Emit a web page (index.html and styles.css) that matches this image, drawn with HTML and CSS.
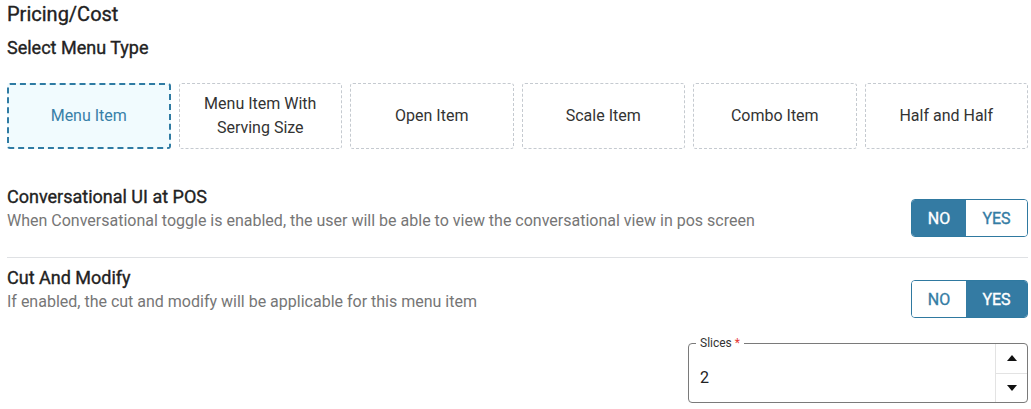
FILE: index.html
```html
<!DOCTYPE html>
<html lang="en">
<head>
    <meta charset="UTF-8">
    <meta name="viewport" content="width=device-width, initial-scale=1.0">
    <title>Pricing/Cost</title>
    <link rel="stylesheet" href="styles.css">
</head>
<body>

<h1 class="page-title">Pricing/Cost</h1>
<h2 class="section-title">Select Menu Type</h2>

<!-- Типы пунктов меню -->
<div class="type-grid">
    <div class="type-card selected">Menu Item</div>
    <div class="type-card">Menu Item With<br>Serving Size</div>
    <div class="type-card">Open Item</div>
    <div class="type-card">Scale Item</div>
    <div class="type-card">Combo Item</div>
    <div class="type-card">Half and Half</div>
</div>

<div class="setting-row with-divider">
    <div class="setting-text">
        <div class="setting-title">Conversational UI at POS</div>
        <div class="setting-desc">When Conversational toggle is enabled, the user will be able to view the conversational view in pos screen</div>
    </div>
    <div class="toggle">
        <span class="toggle-no active">NO</span>
        <span class="toggle-yes">YES</span>
    </div>
</div>

<div class="setting-row">
    <div class="setting-text">
        <div class="setting-title">Cut And Modify</div>
        <div class="setting-desc">If enabled, the cut and modify will be applicable for this menu item</div>
    </div>
    <div class="toggle">
        <span class="toggle-no">NO</span>
        <span class="toggle-yes active">YES</span>
    </div>
</div>

<!-- Поле количества кусков -->
<div class="field-row">
    <div class="number-field">
        <label>Slices <span class="required">*</span></label>
        <div class="number-value">2</div>
        <div class="spinner">
            <div class="spin-btn"><span class="arrow-up"></span></div>
            <div class="spin-btn"><span class="arrow-down"></span></div>
        </div>
    </div>
</div>

</body>
</html>
```

FILE: styles.css
```css
body {
    margin: 0;
    padding: 0 3px 0 7px;
    font-family: Roboto, "Liberation Sans", Arial, sans-serif;
    color: #222;
    background: #fff;
}
/* Полужирный шрифт (medium) */
.page-title,
.section-title,
.setting-title,
.toggle span {
    font-weight: 400;
    -webkit-text-stroke: 0.35px currentColor;
}
.page-title {
    margin: 3px 0 0;
    font-size: 20px;
    line-height: 23px;
    color: #222;
}
.section-title {
    margin: 11px 0 0;
    font-size: 18px;
    line-height: 22px;
    color: #222;
}
.type-grid {
    display: grid;
    grid-template-columns: repeat(6, 1fr);
    gap: 8px;
    margin-top: 24px;
}
.type-card {
    height: 66px;
    box-sizing: border-box;
    border: 1px dashed #c5cad0;
    border-radius: 3px;
    display: flex;
    align-items: center;
    justify-content: center;
    text-align: center;
    font-size: 16px;
    line-height: 24px;
    color: #333;
}
.type-card.selected {
    border: 2px dashed #2f7ba3;
    background-color: #f1fbfe; /* Светлый фон выбранного типа */
    color: #3880a8;
}
.setting-row {
    display: flex;
    justify-content: space-between;
    align-items: flex-start;
    padding-top: 9px;
}
.setting-row.with-divider {
    margin-top: 37px;
    padding-top: 0;
    padding-bottom: 20px;
    border-bottom: 1px solid #dfe1e4;
}
.setting-title {
    font-size: 18px;
    line-height: 22px;
    color: #222;
}
.setting-desc {
    margin-top: 3px;
    font-size: 16px;
    line-height: 20px;
    color: #767676;
}
.toggle {
    display: flex;
    margin-top: 13px;
    height: 38px;
    box-sizing: border-box;
    border: 1px solid #2f79a0;
    border-radius: 4px;
    overflow: hidden;
}
.toggle span {
    display: flex;
    align-items: center;
    justify-content: center;
    font-size: 16px;
    color: #347ca4;
    background: #fff;
}
.toggle-no {
    width: 54px;
}
.toggle-yes {
    width: 61px;
}
.toggle span.active {
    background-color: #347ba3;
    color: #fff;
}
.field-row {
    display: flex;
    justify-content: flex-end;
    margin-top: 25px;
}
.number-field {
    position: relative;
    display: flex;
    width: 340px;
    height: 60px;
    box-sizing: border-box;
    border: 1px solid #7a7a7a;
    border-radius: 4px;
}
.number-field label {
    position: absolute;
    top: -8px;
    left: 7px;
    padding: 0 4px 0 4px;
    background: #fff;
    font-size: 12px;
    line-height: 14px;
    color: #333;
}
.required {
    color: #e53935;
}
.number-value {
    flex: 1;
    padding: 25px 0 0 11px;
    font-size: 16px;
    line-height: 18px;
    color: #222;
}
.spinner {
    width: 31px;
    display: flex;
    flex-direction: column;
    border-left: 1px solid #e3e3e3;
}
.spin-btn {
    flex: 1;
    display: flex;
    align-items: center;
    justify-content: center;
}
.spin-btn + .spin-btn {
    border-top: 1px solid #e3e3e3;
}
.arrow-up,
.arrow-down {
    width: 0;
    height: 0;
    border-left: 5px solid transparent;
    border-right: 5px solid transparent;
}
.arrow-up {
    border-bottom: 6px solid #111;
}
.arrow-down {
    border-top: 6px solid #111;
}
```
